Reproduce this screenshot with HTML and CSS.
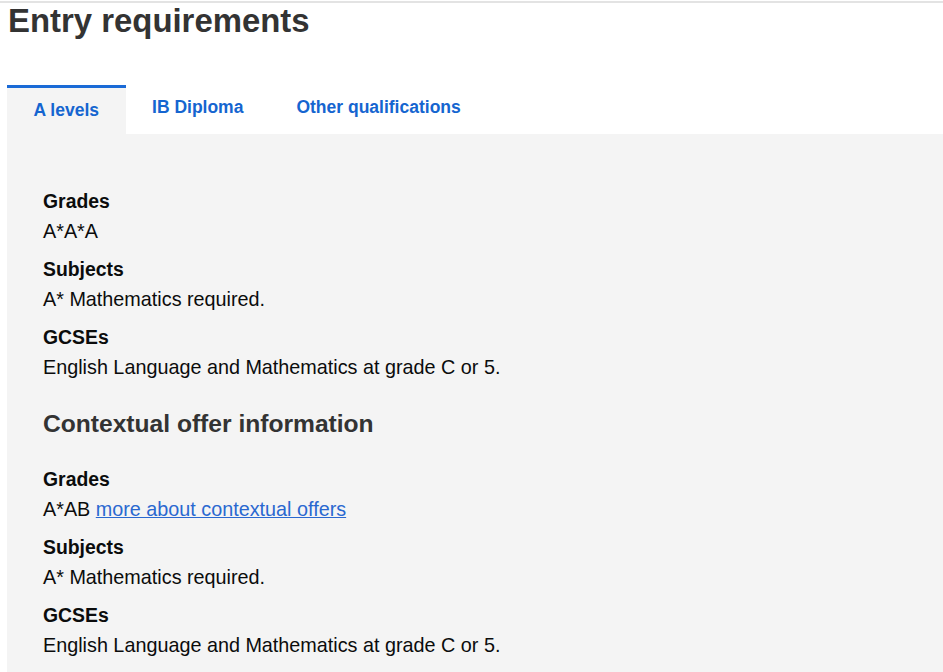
FILE: index.html
```html
<!DOCTYPE html>
<html lang="en">
<head>
<meta charset="utf-8">
<title>Entry requirements</title>
<link rel="stylesheet" href="styles.css">
</head>
<body>
<div class="page">
  <h1 class="title">Entry requirements</h1>
  <div class="tabs">
    <div class="tab tab-active">A levels</div>
    <div class="tab">IB Diploma</div>
    <div class="tab">Other qualifications</div>
  </div>
  <div class="panel">
    <dl class="reqs">
      <div class="req"><dt class="label">Grades</dt><dd class="value">A*A*A</dd></div>
      <div class="req"><dt class="label">Subjects</dt><dd class="value">A* Mathematics required.</dd></div>
      <div class="req"><dt class="label">GCSEs</dt><dd class="value">English Language and Mathematics at grade C or 5.</dd></div>
    </dl>
    <h2 class="subtitle">Contextual offer information</h2>
    <dl class="reqs">
      <div class="req"><dt class="label">Grades</dt><dd class="value">A*AB <a class="link" href="#">more about contextual offers</a></dd></div>
      <div class="req"><dt class="label">Subjects</dt><dd class="value">A* Mathematics required.</dd></div>
      <div class="req"><dt class="label">GCSEs</dt><dd class="value">English Language and Mathematics at grade C or 5.</dd></div>
    </dl>
  </div>
</div>
</body>
</html>
```

FILE: styles.css
```css
html, body {
  margin: 0;
  padding: 0;
  background: #ffffff;
}
body {
  font-family: "Liberation Sans", Arial, sans-serif;
  color: #0b0c0c;
  border-top: 2px solid #e3e3e3;
  margin-top: 1px;
}
.page {
  padding-left: 7px;
}
.title {
  margin: 0 0 0 1px;
  font-size: 32.9px;
  line-height: 36px;
  font-weight: bold;
  color: #333333;
}
.tabs {
  display: flex;
  align-items: flex-start;
  margin-top: 46px;
}
.tab {
  padding: 12px 26.5px 14px;
  font-size: 17.5px;
  line-height: 20px;
  font-weight: bold;
  color: #1565d0;
}
.tab-active {
  background: #f4f4f4;
  border-top: 3px solid #1a6ad6;
}
.panel {
  background: #f4f4f4;
  padding: 52px 36px 12px;
}
.reqs {
  margin: 0;
  display: flex;
  flex-direction: column;
  gap: 8px;
}
.req {
  display: flex;
  flex-direction: column;
}
.label {
  margin: 0;
  font-size: 19.4px;
  line-height: 30px;
  font-weight: bold;
  color: #0b0c0c;
}
.value {
  margin: 0;
  font-size: 19.8px;
  line-height: 30px;
  color: #0b0c0c;
}
.link {
  color: #2a68d0;
  text-decoration: underline;
}
.subtitle {
  margin: 27px 0 25px;
  font-size: 24.6px;
  line-height: 30px;
  font-weight: bold;
  color: #333333;
}
```
